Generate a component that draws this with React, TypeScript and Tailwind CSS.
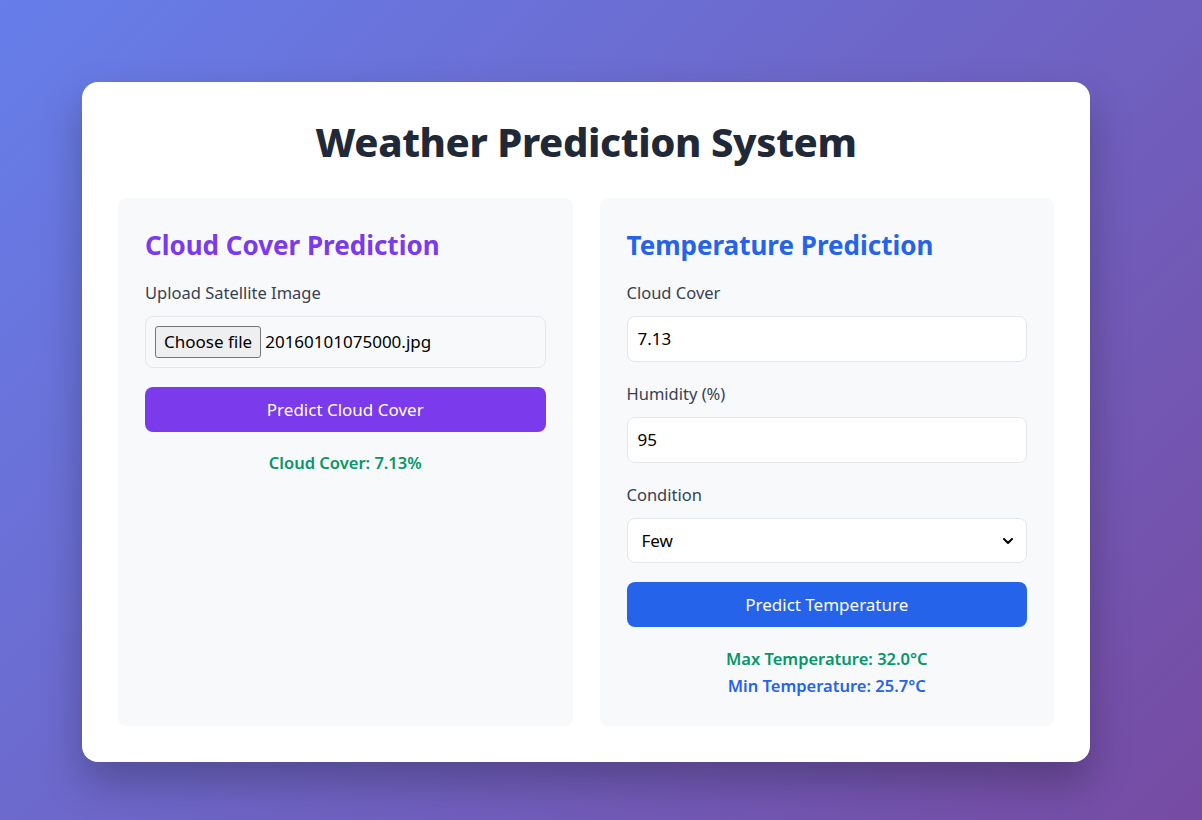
import { ChevronDown } from 'lucide-react'

function Label({ children }: { children: React.ReactNode }) {
  return <div className="text-[16.5px] leading-6 text-[#374151] mb-[11px]">{children}</div>
}

function App() {
  return (
    <div
      className="min-h-screen w-full bg-[linear-gradient(135deg,#667eea_0%,#764ba2_100%)] pt-[82px] pl-[82px] pb-[58px]"
      style={{ fontFamily: '"Noto Sans", "Open Sans", sans-serif' }}
    >
      <div className="w-[1008px] h-[680px] bg-white rounded-2xl shadow-[0_20px_40px_rgba(0,0,0,0.25)] px-9 pt-9 pb-9 flex flex-col">
        {/* Header */}
        <h1 className="text-center text-[40px] leading-[48px] font-extrabold text-[#1f2937] tracking-[-0.4px]">
          Weather Prediction System
        </h1>

        <div className="mt-8 flex-1 min-h-0 grid grid-cols-2 gap-[27px]">
          {/* Cloud cover panel */}
          <div className="bg-[#f8f9fa] rounded-lg px-[27px] pt-[31px]">
            <h2 className="text-[26px] leading-8 font-bold text-[#7c3aed] mb-5">Cloud Cover Prediction</h2>
            <Label>Upload Satellite Image</Label>
            <div className="h-[52px] border border-[#e5e7eb] rounded-lg flex items-center px-[9px] gap-1 text-[17px] text-black">
              <span className="h-[32px] px-2 flex items-center bg-[#efefef] border border-[#767676] rounded-[3px]">
                Choose file
              </span>
              <span>20160101075000.jpg</span>
            </div>
            <button className="mt-[19px] w-full h-[45px] rounded-lg bg-[#7c3aed] text-white text-[17px]">
              Predict Cloud Cover
            </button>
            <div className="mt-[19px] text-center text-[16.5px] leading-6 font-semibold text-[#059669]">
              Cloud Cover: 7.13%
            </div>
          </div>

          {/* Temperature panel */}
          <div className="bg-[#f8f9fa] rounded-lg px-[27px] pt-[31px]">
            <h2 className="text-[26px] leading-8 font-bold text-[#2563eb] mb-5">Temperature Prediction</h2>
            <Label>Cloud Cover</Label>
            <div className="h-[46px] bg-white border border-[#e5e7eb] rounded-lg flex items-center px-[10px] text-[17px] text-black">
              7.13
            </div>
            <div className="mt-5">
              <Label>Humidity (%)</Label>
            </div>
            <div className="h-[46px] bg-white border border-[#e5e7eb] rounded-lg flex items-center px-[10px] text-[17px] text-black">
              95
            </div>
            <div className="mt-5">
              <Label>Condition</Label>
            </div>
            <div className="h-[45px] bg-white border border-[#e5e7eb] rounded-lg flex items-center justify-between pl-[14px] pr-[10px] text-[17px] text-black">
              <span>Few</span>
              <ChevronDown size={16} strokeWidth={3} />
            </div>
            <button className="mt-[19px] w-full h-[45px] rounded-lg bg-[#2563eb] text-white text-[17px]">
              Predict Temperature
            </button>
            <div className="mt-[18px] text-center text-[16.5px] leading-[27px] font-semibold">
              <div className="text-[#059669]">Max Temperature: 32.0°C</div>
              <div className="text-[#2563eb]">Min Temperature: 25.7°C</div>
            </div>
          </div>
        </div>
      </div>
    </div>
  )
}

export default App
